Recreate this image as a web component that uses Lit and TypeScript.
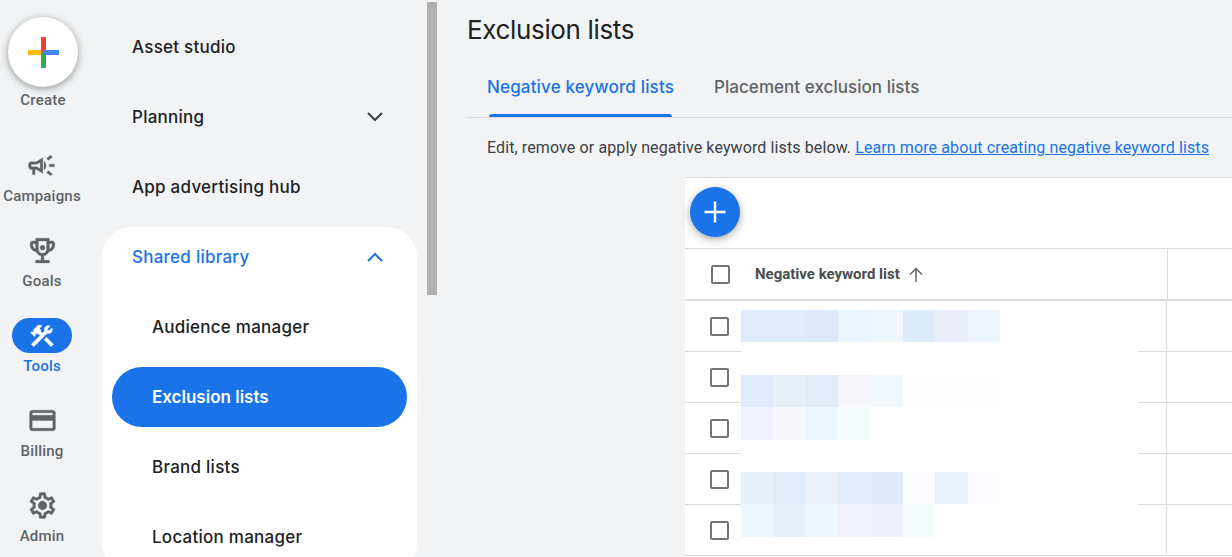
import { LitElement, html, css, svg } from "lit";
import { customElement } from "lit/decorators.js";

const ICONS = {
  campaign: "M18 11v2h4v-2h-4zm-2 6.61c.96.71 2.21 1.65 3.2 2.39.4-.53.8-1.07 1.2-1.6-.99-.74-2.24-1.68-3.2-2.4-.4.54-.8 1.08-1.2 1.61zM20.4 5.6c-.4-.53-.8-1.07-1.2-1.6-.99.74-2.24 1.68-3.2 2.4.4.53.8 1.07 1.2 1.6.96-.72 2.21-1.65 3.2-2.4zM4 9c-1.1 0-2 .9-2 2v2c0 1.1.9 2 2 2h1v4h2v-4h1l5 3V6L8 9H4zm5.03 1.71L11 9.53v4.94l-1.97-1.18-.48-.29H4v-2h4.55l.48-.29zM15.5 12c0-1.33-.58-2.53-1.5-3.35v6.69c.92-.81 1.5-2.01 1.5-3.34z",
  trophy: "M19 5h-2V3H7v2H5c-1.1 0-2 .9-2 2v1c0 2.55 1.92 4.63 4.39 4.94.63 1.5 1.98 2.63 3.61 2.96V19H7v2h10v-2h-4v-3.1c1.63-.33 2.98-1.46 3.61-2.96C19.08 12.63 21 10.55 21 8V7c0-1.1-.9-2-2-2zM5 8V7h2v3.82C5.84 10.4 5 9.3 5 8zm7 6c-1.65 0-3-1.35-3-3V5h6v6c0 1.65-1.35 3-3 3zm7-6c0 1.3-.84 2.4-2 2.82V7h2v1zM12 8.2a1.8 1.8 0 1 0 0 3.6 1.8 1.8 0 0 0 0-3.6z",
  tools: "M13.783 15.172l2.121-2.121 5.996 5.996-2.121 2.121zM17.5 10c1.93 0 3.5-1.57 3.5-3.5 0-.58-.16-1.12-.41-1.6l-2.7 2.7-1.49-1.49 2.7-2.7c-.48-.25-1.02-.41-1.6-.41C15.57 3 14 4.57 14 6.5c0 .41.08.8.21 1.16l-1.85 1.85-1.78-1.78.71-.71-1.41-1.41L12 3.49c-1.17-1.17-3.07-1.17-4.24 0L4.22 7.03l1.41 1.41H2.81l-.71.71 3.54 3.54.71-.71V9.15l1.41 1.41.71-.71 1.78 1.78-7.41 7.41 2.12 2.12L16.34 9.79c.36.13.75.21 1.16.21z",
  billing: "M20 4H4c-1.11 0-1.99.89-1.99 2L2 18c0 1.11.89 2 2 2h16c1.11 0 2-.89 2-2V6c0-1.11-.89-2-2-2zm0 14H4v-6h16v6zm0-10H4V6h16v2z",
  admin: "M19.43 12.98c.04-.32.07-.64.07-.98 0-.34-.03-.66-.07-.98l2.11-1.65c.19-.15.24-.42.12-.64l-2-3.46c-.09-.16-.26-.25-.44-.25-.06 0-.12.01-.17.03l-2.49 1c-.52-.4-1.08-.73-1.69-.98l-.38-2.65C14.46 2.18 14.25 2 14 2h-4c-.25 0-.46.18-.49.42l-.38 2.65c-.61.25-1.17.59-1.69.98l-2.49-1c-.06-.02-.12-.03-.18-.03-.17 0-.34.09-.43.25l-2 3.46c-.13.22-.07.49.12.64l2.11 1.65c-.04.32-.07.65-.07.98 0 .33.03.66.07.98l-2.11 1.65c-.19.15-.24.42-.12.64l2 3.46c.09.16.26.25.44.25.06 0 .12-.01.17-.03l2.49-1c.52.4 1.08.73 1.69.98l.38 2.65c.03.24.24.42.49.42h4c.25 0 .46-.18.49-.42l.38-2.65c.61-.25 1.17-.59 1.69-.98l2.49 1c.06.02.12.03.18.03.17 0 .34-.09.43-.25l2-3.46c.12-.22.07-.49-.12-.64l-2.11-1.65zm-1.98-1.71c.04.31.05.52.05.73 0 .21-.02.43-.05.73l-.14 1.13.89.7 1.08.84-.7 1.21-1.27-.51-1.04-.42-.9.68c-.43.32-.84.56-1.25.73l-1.06.43-.16 1.13-.2 1.35h-1.4l-.19-1.35-.16-1.13-1.06-.43c-.43-.18-.83-.41-1.23-.71l-.91-.7-1.06.43-1.27.51-.7-1.21 1.08-.84.89-.7-.14-1.13c-.03-.31-.05-.54-.05-.74s.02-.43.05-.73l.14-1.13-.89-.7-1.08-.84.7-1.21 1.27.51 1.04.42.9-.68c.43-.32.84-.56 1.25-.73l1.06-.43.16-1.13.2-1.35h1.39l.19 1.35.16 1.13 1.06.43c.43.18.83.41 1.23.71l.91.7 1.06-.43 1.27-.51.7 1.21-1.07.85-.89.7.14 1.13zM12 8.6a3.4 3.4 0 1 0 0 6.8 3.4 3.4 0 0 0 0-6.8z",
};

const RAIL = [
  { id: "campaign", label: "Campaigns", size: 31 },
  { id: "trophy", label: "Goals", size: 33 },
  { id: "tools", label: "Tools", size: 28, active: true },
  { id: "billing", label: "Billing", size: 31 },
  { id: "admin", label: "Admin", size: 31 },
];

const MOSAIC: string[][] = [
  ["#dfeafa", "#deebfa", "#dde8f8", "#ebf5fe", "#eff7fd", "#dcebfa", "#eaedf9", "#eef5fe"],
  [],
  ["#deebfc", "#e6f0fa", "#e1ecfb", "#f6f5fa", "#f2f8fd", "#fefefe", "#fefefe", "#fefefe"],
  ["#f0f3fc", "#f8f7fb", "#ebf6fe", "#f6fbfe"],
  [],
  ["#e5f2fd", "#e1ecfa", "#ecf0fa", "#e0edfb", "#dee9fa", "#fcfcfe", "#e9f1fc", "#fbfbfd"],
  ["#ebf7fe", "#e5f2fc", "#ecf7fe", "#f0f1fb", "#f0f0fb", "#f6fbfe"],
];

const chevron = (up: boolean) => html`<svg class="chev" width="18" height="10" viewBox="0 0 18 10" fill="none">
  ${svg`<path d=${up ? "M2 9l7-7 7 7" : "M2 1l7 7 7-7"} stroke="currentColor" stroke-width="2"/>`}
</svg>`;

@customElement("app-root")
export class AppRoot extends LitElement {
  static styles = css`
    :host {
      display: flex;
      width: 1232px;
      height: 557px;
      overflow: hidden;
      background: #f1f3f4;
      font-family: Roboto, "Liberation Sans", sans-serif;
      color: #202124;
    }
    .rail {
      width: 84px;
      margin-right: 18px;
      flex: none;
      display: flex;
      flex-direction: column;
      align-items: center;
    }
    .create {
      display: flex;
      flex-direction: column;
      align-items: center;
      padding-top: 17px;
      height: 148px;
      flex: none;
      box-sizing: border-box;
      margin-left: 2px;
    }
    .create-btn {
      width: 70px;
      height: 70px;
      border-radius: 50%;
      background: #fff;
      flex: none;
      box-shadow: 0 2px 6px rgba(60, 64, 67, 0.4), 0 1px 10px rgba(60, 64, 67, 0.15);
      display: flex;
      align-items: center;
      justify-content: center;
    }
    .label {
      font-size: 15px;
      font-weight: 500;
      letter-spacing: 0.2px;
      color: #5f6368;
      line-height: 20px;
      white-space: nowrap;
    }
    .create .label { margin-top: 3px; }
    .rail-item {
      height: 85px;
      flex: none;
      display: flex;
      flex-direction: column;
      align-items: center;
      box-sizing: border-box;
    }
    .icon-box {
      width: 60px;
      height: 35px;
      border-radius: 18px;
      display: flex;
      align-items: center;
      justify-content: center;
      color: #5f6368;
      margin-bottom: 3px;
    }
    .icon-box svg { stroke: currentColor; stroke-width: 0.25; }
    .rail-item.active .icon-box { background: #1a73e8; color: #fff; }
    .rail-item.active .label { color: #1a73e8; }
    .nav {
      width: 315px;
      flex: none;
      padding-top: 12px;
      font-family: Inter, sans-serif;
      letter-spacing: 0.25px;
    }
    .nav-item {
      height: 70px;
      display: flex;
      align-items: center;
      justify-content: space-between;
      padding: 0 33px 0 30px;
      font-size: 17px;
      font-weight: 500;
      color: #202124;
      box-sizing: border-box;
    }
    .chev { color: #3c4043; display: block; }
    .card {
      background: #fff;
      border-radius: 30px;
      height: 345px;
      margin-top: 5px;
    }
    .card .head { color: #1a73e8; height: 60px; margin-bottom: 5px; }
    .card .head .chev { color: #1a73e8; }
    .sub {
      height: 70px;
      display: flex;
      align-items: center;
      padding-left: 50px;
      font-size: 17px;
      font-weight: 500;
      box-sizing: border-box;
    }
    .sub.active {
      background: #1a73e8;
      color: #fff;
      height: 60px;
      margin: 5px 10px;
      padding-left: 40px;
      border-radius: 30px;
      font-weight: 600;
      letter-spacing: 0;
    }
    .scroll {
      width: 10px;
      height: 293px;
      margin: 2px 0 0 10px;
      background: #b0b0b0;
      flex: none;
    }
    .main {
      flex: 1;
      min-width: 0;
      margin-left: 30px;
      display: flex;
      flex-direction: column;
    }
    h1 {
      margin: 0;
      height: 60px;
      line-height: 60px;
      font-family: Inter, sans-serif;
      font-weight: 400;
      font-size: 26px;
      letter-spacing: -0.35px;
      color: #202124;
    }
    .tabs {
      display: flex;
      gap: 40px;
      padding-left: 20px;
      height: 57px;
      flex: none;
      border-bottom: 1px solid #dadce0;
      font-family: Inter, sans-serif;
      font-size: 17px;
      font-weight: 500;
      letter-spacing: 0.04px;
      color: #5f6368;
    }
    .tab { display: flex; flex-direction: column; }
    .tab span { line-height: 54px; white-space: nowrap; }
    .tab.active { color: #1a73e8; letter-spacing: 0.16px; }
    .tab.active::after {
      content: "";
      height: 3px;
      margin: 0 2px;
      background: #1a73e8;
      border-radius: 3px 3px 0 0;
    }
    .desc {
      height: 59px;
      flex: none;
      display: flex;
      align-items: center;
      padding-left: 20px;
      font-size: 16px;
      letter-spacing: 0.11px;
      color: #3c4043;
      white-space: nowrap;
      gap: 4px;
    }
    .desc a { color: #1a73e8; text-decoration: underline; }
    .table {
      margin-left: 218px;
      background: #fff;
      border-top: 1px solid #dadce0;
      flex: 1;
    }
    .toolbar {
      border-bottom: 1px solid #dadce0;
      padding-left: 5px;
      padding-top: 9px;
      height: 61px;
    }
    .fab {
      width: 50px;
      height: 50px;
      border-radius: 50%;
      background: #1a73e8;
      display: flex;
      align-items: center;
      justify-content: center;
      box-shadow: 0 2px 6px rgba(60, 64, 67, 0.35), 0 4px 12px rgba(60, 64, 67, 0.12);
    }
    .thead {
      height: 50px;
      display: flex;
      border-bottom: 2px solid #dadce0;
    }
    .th {
      width: 483px;
      flex: none;
      display: flex;
      align-items: center;
      padding-left: 26px;
      box-sizing: border-box;
      border-right: 1px solid #dadce0;
      font-size: 15px;
      font-weight: 700;
      color: #4a4d51;
    }
    .th .txt { margin-left: 25px; }
    .th svg { margin-left: 8px; color: #5f6368; }
    .check {
      width: 15px;
      height: 15px;
      border: 2px solid #757575;
      border-radius: 2px;
      flex: none;
    }
    .rows { position: relative; }
    .row {
      height: 50px;
      display: flex;
      border-bottom: 1px solid #dadce0;
    }
    .td {
      width: 482px;
      flex: none;
      box-sizing: border-box;
      display: flex;
      align-items: center;
      padding-left: 25px;
      border-right: 1px solid #dadce0;
    }
    .mosaic {
      position: absolute;
      left: 56px;
      top: 0;
      width: 397px;
      height: 240px;
      padding-top: 9px;
      box-sizing: border-box;
      background: #fff;
    }
    .m-row { display: flex; height: 32.4px; }
    .m-cell { width: 32.4px; height: 100%; flex: none; }
  `;

  render() {
    return html`
      <aside class="rail">
        <div class="create">
          <div class="create-btn">
            <svg width="32" height="32" viewBox="0 0 32 32">
              <rect x="14" y="1" width="5" height="15" fill="#ea4335" />
              <rect x="14" y="16" width="5" height="16" fill="#34a853" />
              <rect x="1" y="14" width="13" height="5" fill="#fbbc04" />
              <rect x="16" y="14" width="16" height="5" fill="#4285f4" />
              <path d="M14 14l5-5v5z" fill="#ea4335" />
              <path d="M19 14v5h-3z" fill="#4285f4" />
            </svg>
          </div>
          <div class="label">Create</div>
        </div>
        ${RAIL.map(
          (r) => html`<div class="rail-item ${r.active ? "active" : ""}">
            <div class="icon-box">
              <svg width=${r.size} height=${r.size} viewBox="0 0 24 24" fill="currentColor">
                ${svg`<path d=${(ICONS as Record<string, string>)[r.id]} fill-rule="evenodd" />`}
              </svg>
            </div>
            <div class="label">${r.label}</div>
          </div>`
        )}
      </aside>
      <nav class="nav">
        <div class="nav-item">Asset studio</div>
        <div class="nav-item">Planning ${chevron(false)}</div>
        <div class="nav-item">App advertising hub</div>
        <div class="card">
          <div class="nav-item head">Shared library ${chevron(true)}</div>
          <div class="sub">Audience manager</div>
          <div class="sub active">Exclusion lists</div>
          <div class="sub">Brand lists</div>
          <div class="sub">Location manager</div>
        </div>
      </nav>
      <div class="scroll"></div>
      <main class="main">
        <h1>Exclusion lists</h1>
        <div class="tabs">
          <div class="tab active"><span>Negative keyword lists</span></div>
          <div class="tab"><span>Placement exclusion lists</span></div>
        </div>
        <div class="desc">
          <span>Edit, remove or apply negative keyword lists below.</span>
          <a>Learn more about creating negative keyword lists</a>
        </div>
        <section class="table">
          <div class="toolbar">
            <div class="fab">
              <svg width="24" height="24" viewBox="0 0 24 24">
                <path d="M12 1.5v21M1.5 12h21" stroke="#fff" stroke-width="2.4" fill="none" />
              </svg>
            </div>
          </div>
          <div class="thead">
            <div class="th">
              <div class="check"></div>
              <span class="txt">Negative keyword list</span>
              <svg width="16" height="16" viewBox="0 0 16 16" fill="none">
                <path d="M8 16V2.5M2 8.5l6-6 6 6" stroke="currentColor" stroke-width="1.5" />
              </svg>
            </div>
          </div>
          <div class="rows">
            ${[0, 1, 2, 3, 4].map(
              () => html`<div class="row"><div class="td"><div class="check"></div></div></div>`
            )}
            <div class="mosaic">
              ${MOSAIC.map(
                (row) => html`<div class="m-row">
                  ${row.map((c) => html`<div class="m-cell" style="background:${c}"></div>`)}
                </div>`
              )}
            </div>
          </div>
        </section>
      </main>
    `;
  }
}
